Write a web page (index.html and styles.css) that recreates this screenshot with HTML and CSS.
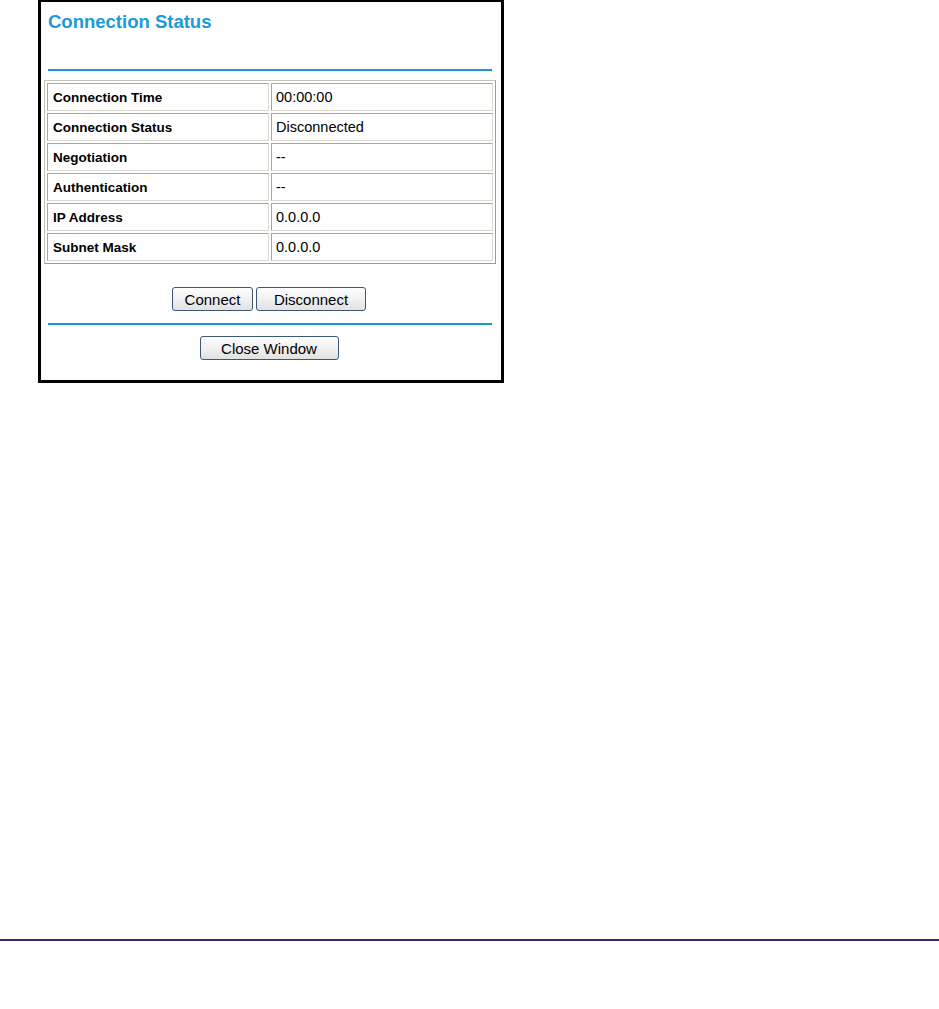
FILE: index.html
```html
<!DOCTYPE html>
<html>
<head>
<meta charset="utf-8">
<link rel="stylesheet" href="styles.css">
</head>
<body>
<div class="frame">
  <h1 class="title">Connection Status</h1>
  <div class="rule rule-top"></div>
  <table class="status">
    <tr><td class="label">Connection Time</td><td class="value">00:00:00</td></tr>
    <tr><td class="label">Connection Status</td><td class="value">Disconnected</td></tr>
    <tr><td class="label">Negotiation</td><td class="value">--</td></tr>
    <tr><td class="label">Authentication</td><td class="value">--</td></tr>
    <tr><td class="label">IP Address</td><td class="value">0.0.0.0</td></tr>
    <tr><td class="label">Subnet Mask</td><td class="value">0.0.0.0</td></tr>
  </table>
  <div class="buttons">
    <button class="btn btn-connect">Connect</button>
    <button class="btn btn-disconnect">Disconnect</button>
  </div>
  <div class="rule rule-bottom"></div>
  <div class="buttons buttons-close">
    <button class="btn btn-close">Close Window</button>
  </div>
</div>
<div class="page-spacer"></div>
<div class="footer-rule"></div>
</body>
</html>
```

FILE: styles.css
```css
html, body {
  margin: 0;
  padding: 0;
  background: #ffffff;
  font-family: "Liberation Sans", Arial, sans-serif;
}

.frame {
  box-sizing: border-box;
  margin-left: 38px;
  width: 466px;
  height: 383px;
  border: 3px solid #000000;
  border-top-width: 2px;
  display: flex;
  flex-direction: column;
}

.title {
  margin: 9px 0 0 7px;
  font-size: 18.5px;
  font-weight: bold;
  color: #1b9ad6;
  line-height: 22px;
}

.rule {
  height: 2px;
  background: #1a97d3;
  margin-left: 7px;
  width: 444px;
}

.rule-top {
  margin-top: 36px;
}

.status {
  margin: 9px 0 0 3px;
  width: 452px;
  border-collapse: separate;
  border-spacing: 2px;
  border: 1px solid #c6c4b8;
  border-right-color: #9e9c92;
  border-bottom-color: #9e9c92;
  font-size: 14.5px;
}

.status td {
  height: 26px;
  padding: 0 0 0 5px;
  border: 1px solid #a9a79c;
  border-right-color: #dcdad0;
  border-bottom-color: #dcdad0;
  color: #000000;
}

.status .label {
  width: 215px;
  font-weight: bold;
  font-size: 13.5px;
}

.status .value {
  padding-left: 4px;
}

.buttons {
  display: flex;
  justify-content: center;
  gap: 3px;
  margin-top: 23px;
  padding-right: 4px;
}

.btn {
  box-sizing: border-box;
  height: 24px;
  padding: 0;
  font-family: "Liberation Sans", Arial, sans-serif;
  font-size: 15px;
  color: #000000;
  border: 1px solid #3d5874;
  border-radius: 3px;
  background: linear-gradient(#fefefe, #f1f1f1 50%, #e1e1e1);
}

.btn-connect { width: 81px; }
.btn-disconnect { width: 110px; }
.btn-close { width: 139px; }

.rule-bottom {
  margin-top: 12px;
}

.buttons-close {
  margin-top: 11px;
}

.page-spacer {
  height: 556px;
}

.footer-rule {
  height: 2px;
  background: #2f2f6e;
  width: 100%;
}
```
